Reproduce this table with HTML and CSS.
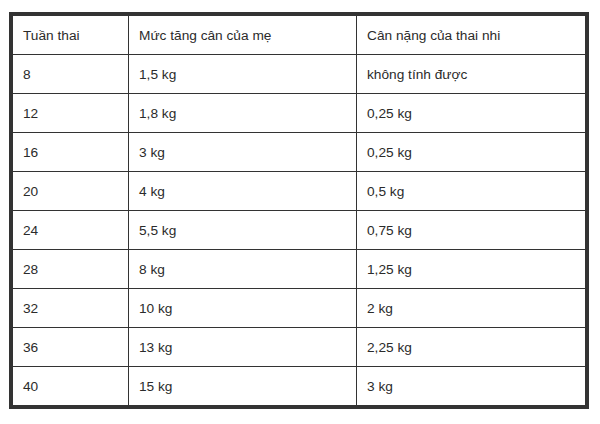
FILE: index.html
```html
<!DOCTYPE html>
<html>
<head>
<meta charset="utf-8">
<link rel="stylesheet" href="styles.css">
</head>
<body>
<div class="frame">
<table class="grid">
<tr><td class="c1">Tuần thai</td><td class="c2">Mức tăng cân của mẹ</td><td class="c3">Cân nặng của thai nhi</td></tr>
<tr><td class="c1">8</td><td class="c2">1,5 kg</td><td class="c3">không tính được</td></tr>
<tr><td class="c1">12</td><td class="c2">1,8 kg</td><td class="c3">0,25 kg</td></tr>
<tr><td class="c1">16</td><td class="c2">3 kg</td><td class="c3">0,25 kg</td></tr>
<tr><td class="c1">20</td><td class="c2">4 kg</td><td class="c3">0,5 kg</td></tr>
<tr><td class="c1">24</td><td class="c2">5,5 kg</td><td class="c3">0,75 kg</td></tr>
<tr><td class="c1">28</td><td class="c2">8 kg</td><td class="c3">1,25 kg</td></tr>
<tr><td class="c1">32</td><td class="c2">10 kg</td><td class="c3">2 kg</td></tr>
<tr><td class="c1">36</td><td class="c2">13 kg</td><td class="c3">2,25 kg</td></tr>
<tr><td class="c1">40</td><td class="c2">15 kg</td><td class="c3">3 kg</td></tr>
</table>
</div>
</body>
</html>
```
FILE: styles.css
```css
html, body {
  margin: 0;
  padding: 0;
  background: #ffffff;
}
body {
  padding: 12px 0 0 9px;
  font-family: "Liberation Sans", Arial, sans-serif;
  font-size: 13.7px;
  color: #2b2b2b;
}
.frame {
  width: 572px;
  border: 4px solid #333333;
}
.grid {
  width: 572px;
  border-collapse: separate;
  border-spacing: 0;
  table-layout: fixed;
}
.grid td {
  height: 39px;
  padding: 0 0 0 10px;
  vertical-align: middle;
  border-bottom: 1px solid #333333;
  box-sizing: border-box;
  white-space: nowrap;
}
.grid tr:last-child td {
  border-bottom: none;
  height: 38px;
}
.c1 {
  width: 116px;
  border-right: 1px solid #333333;
}
.c2 {
  width: 228px;
  border-right: 1px solid #333333;
}
.c3 {
  width: 228px;
}
```
